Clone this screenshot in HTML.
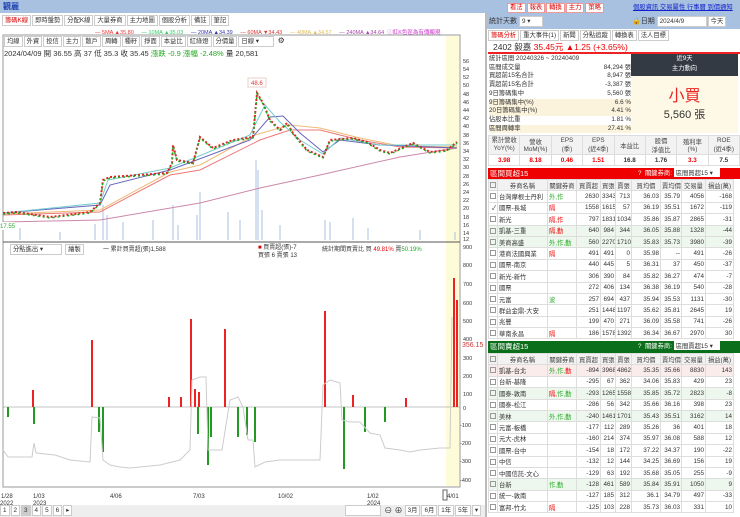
<!DOCTYPE html>
<html><head><meta charset="utf-8"><style>
*{box-sizing:border-box;margin:0;padding:0}
body{width:740px;height:517px;overflow:hidden;background:#fff;font-family:"Liberation Sans","Noto Sans CJK TC",sans-serif;font-size:8px;color:#333;position:relative}
.abs{position:absolute}
.top{left:0;top:0;width:740px;height:13px;background:#a9c1e0}
.tab{display:inline-block;border:1px solid #ccc;padding:0 2px;height:11px;line-height:9px;font-size:6.3px;margin-right:1px;background:#fff;vertical-align:top}
.btn{display:inline-block;border:1px solid #e99;color:#d00;padding:0 2px;height:10px;line-height:8px;font-size:6.3px;background:#fff;margin-right:1px}
table{border-collapse:collapse;font-size:6.3px;table-layout:fixed}
td{border:1px solid #ddd;height:11.4px;padding:0 1px;text-align:right;white-space:nowrap;overflow:hidden}
td.l{text-align:left}
.hd td{background:#f2f2f2;text-align:center;color:#444}
.g{background:#eef7ee}.p{background:#fbecec}
.cb{display:inline-block;width:6px;height:6px;border:1px solid #999;vertical-align:middle}
.r{color:#e00}.gr{color:#2a2}
</style></head><body>
<div class="abs top"><span style="position:absolute;left:3px;top:1px;color:#1a3fb0;font-weight:bold;font-size:8px">觀麗</span>
<div style="position:absolute;left:507px;top:2px;white-space:nowrap"><span class="btn">看法</span><span class="btn">報表</span><span class="btn">轉換</span><span class="btn">主力</span><span class="btn">策略</span></div>
<div style="position:absolute;left:633px;top:2px;font-size:6.3px;color:#12c;text-decoration:underline;white-space:nowrap">個股資訊 交易屬性 行事曆 到價通知</div></div>
<div class="abs" style="left:2px;top:15px;white-space:nowrap"><span class="tab" style="color:#d00">籌碼K線</span><span class="tab">即時盤勢</span><span class="tab">分配K線</span><span class="tab">大量券商</span><span class="tab">主力地圖</span><span class="tab">個股分析</span><span class="tab">備註</span><span class="tab">筆記</span></div>
<div class="abs" style="left:95px;top:28px;font-size:5.5px;white-space:nowrap"><span style="color:#e33">— 5MA ▲35.80</span>&nbsp;&nbsp;&nbsp;&nbsp; <span style="color:#3c6">— 10MA ▲35.03</span>&nbsp;&nbsp;&nbsp;&nbsp; <span style="color:#33a">— 20MA ▲34.39</span>&nbsp;&nbsp;&nbsp;&nbsp; <span style="color:#d33">— 60MA ▼34.43</span>&nbsp;&nbsp;&nbsp;&nbsp; <span style="color:#db5">— 40MA ▲34.57</span>&nbsp;&nbsp;&nbsp;&nbsp; <span style="color:#a4a">— 240MA ▲34.64</span>&nbsp; <span style="color:#c3c">ⓘ紅K色區為有傳顯現</span></div>
<svg class="abs" style="left:0;top:33px" width="485" height="472">
<rect x="3" y="2" width="457" height="452" fill="none" stroke="#999"/>
<rect x="446" y="3" width="13" height="450" fill="#fdfbd8"/>
<line x1="3" y1="209" x2="460" y2="209" stroke="#555"/>
<g font-size="5.5" fill="#333">
<text x="463" y="30">56</text><text x="463" y="38">54</text><text x="463" y="46">52</text><text x="463" y="54">50</text><text x="463" y="63">48</text><text x="463" y="71">46</text><text x="463" y="79">44</text><text x="463" y="87">42</text><text x="463" y="95">40</text><text x="463" y="104">38</text><text x="463" y="112">36</text><text x="463" y="120">34</text><text x="463" y="128">32</text><text x="463" y="136">30</text><text x="463" y="145">28</text><text x="463" y="153">26</text><text x="463" y="161">24</text><text x="463" y="169">22</text><text x="463" y="177">20</text><text x="463" y="186">18</text><text x="463" y="194">16</text><text x="463" y="202">14</text><text x="463" y="208">12</text>
<text x="463" y="216">900</text><text x="463" y="234">800</text><text x="463" y="253">700</text><text x="463" y="272">600</text><text x="463" y="290">500</text><text x="463" y="308">400</text><text x="463" y="327">300</text><text x="463" y="345">200</text><text x="463" y="363">100</text><text x="463" y="377">0</text><text x="460" y="394">-100</text><text x="460" y="412">-200</text><text x="460" y="430">-300</text><text x="460" y="449">-400</text>
<text x="462" y="314" fill="#c33" font-size="7">356.15</text>
</g>
<g transform="translate(0,-33)">
<g stroke="#b8cce4" stroke-width="1.2">
<line x1="20" y1="240" x2="20" y2="228"/><line x1="60" y1="240" x2="60" y2="232"/><line x1="95" y1="240" x2="95" y2="224"/><line x1="103" y1="240" x2="103" y2="205"/><line x1="107" y1="240" x2="107" y2="215"/><line x1="123" y1="240" x2="123" y2="222"/><line x1="153" y1="240" x2="153" y2="220"/><line x1="173" y1="240" x2="173" y2="205"/><line x1="178" y1="240" x2="178" y2="225"/><line x1="200" y1="240" x2="200" y2="192"/><line x1="197" y1="240" x2="197" y2="215"/><line x1="228" y1="240" x2="228" y2="212"/><line x1="240" y1="240" x2="240" y2="220"/><line x1="256" y1="240" x2="256" y2="160"/><line x1="258" y1="240" x2="258" y2="170"/><line x1="262" y1="240" x2="262" y2="210"/><line x1="280" y1="240" x2="280" y2="225"/><line x1="325" y1="240" x2="325" y2="220"/><line x1="330" y1="240" x2="330" y2="222"/><line x1="353" y1="240" x2="353" y2="218"/><line x1="368" y1="240" x2="368" y2="228"/><line x1="420" y1="240" x2="420" y2="230"/><line x1="455" y1="240" x2="455" y2="232"/>
</g>
<polyline fill="none" stroke="#c8a" stroke-width="1" points="3,222 100,220 200,203 260,188 320,175 400,157 457,148"/>
<polyline fill="none" stroke="#e77" stroke-width="1" points="3,215 100,212 170,175 200,170 260,140 290,130 320,130 360,140 400,147 457,148"/>
<polyline fill="none" stroke="#eb7" stroke-width="1" points="3,214 100,210 170,172 200,165 255,135 290,125 320,128 360,138 400,146 457,147"/>
<polyline fill="none" stroke="#66b" stroke-width="1" points="3,213 100,205 110,185 170,170 250,140 270,117 283,116 300,133 323,152 340,140 380,145 457,148"/>
<polyline fill="none" stroke="#7cc" stroke-width="1" points="3,213 100,203 108,180 170,168 250,135 265,105 280,122 300,140 323,154 340,138 380,145 457,145"/>
<polyline fill="none" stroke="#d22" stroke-width="2" stroke-dasharray="2 2" points="3,213 17,212 50,217 90,212 100,203 103,180 110,177 167,173 172,163 173,145 177,160 193,163 200,137 213,148 233,140 253,137 257,93 263,103 270,120 280,130 287,123 293,133 307,150 323,157 330,140 353,138 367,142 380,150 390,153 413,143 430,152 447,150 457,142"/>
<polyline fill="none" stroke="#2a2" stroke-width="1.5" stroke-dasharray="2 3" points="3,214 17,213 50,218 90,213 100,204 103,181 110,178 167,174 172,164 173,146 177,161 193,164 200,138 213,149 233,141 253,138 257,94 263,104 270,121 280,131 287,124 293,134 307,151 323,158 330,141 353,139 367,143 380,151 390,154 413,144 430,153 447,151 457,143"/>
<rect x="248" y="78" width="18" height="9" fill="#fff" stroke="#ecc"/><text x="251" y="85" font-size="6" fill="#d33">48.6</text>
<rect x="0" y="222" width="14" height="8" fill="#fff"/><text x="0" y="228" font-size="6" fill="#3a3">17.55</text>
<g stroke="#888" stroke-width=".5"><line x1="3" y1="407" x2="460" y2="407"/></g>
<g fill="#e22"><rect x="32" y="390" width="2" height="17"/><rect x="91" y="340" width="2" height="67"/><rect x="190" y="319" width="2" height="88"/><rect x="224" y="329" width="2" height="78"/><rect x="324" y="311" width="2" height="96"/><rect x="453" y="278" width="2" height="129"/><rect x="456" y="300" width="2" height="107"/><rect x="168" y="397" width="2" height="10"/><rect x="180" y="397" width="2" height="10"/><rect x="194" y="389" width="2" height="18"/><rect x="198" y="392" width="2" height="15"/><rect x="352" y="395" width="2" height="12"/><rect x="405" y="398" width="2" height="9"/></g>
<g fill="#292"><rect x="7" y="407" width="2" height="10"/><rect x="33" y="407" width="2" height="17"/><rect x="98" y="407" width="2" height="25"/><rect x="102" y="407" width="2" height="45"/><rect x="197" y="407" width="2" height="27"/><rect x="207" y="407" width="2" height="58"/><rect x="210" y="407" width="2" height="30"/><rect x="237" y="407" width="2" height="30"/><rect x="246" y="407" width="2" height="28"/><rect x="254" y="407" width="2" height="35"/><rect x="343" y="407" width="2" height="62"/><rect x="364" y="407" width="2" height="25"/><rect x="384" y="407" width="2" height="15"/></g>
<polyline fill="none" stroke="#ccc" stroke-width="1" points="3,450 8,457 32,457 34,443 36,453 55,455 70,460 90,462 92,417 100,418 103,460 110,465 120,467 130,468 160,465 180,460 190,450 192,380 200,377 206,377 208,450 222,450 230,400 238,397 243,407 248,440 253,440 255,467 265,462 280,460 300,460 320,460 323,385 330,380 340,383 342,420 350,422 360,422 370,433 380,435 385,448 400,450 410,452 420,450 440,448 450,448 452,317"/>
</g>
<g font-size="6" fill="#333"><text x="1" y="465">1/28</text><text x="0" y="472">2022</text><text x="33" y="465">1/03</text><text x="33" y="472">2023</text><text x="110" y="465">4/06</text><text x="193" y="465">7/03</text><text x="278" y="465">10/02</text><text x="367" y="465">1/02</text><text x="367" y="472">2024</text><text x="447" y="465">4/01</text></g>
<rect x="443" y="457" width="4" height="10" fill="#fff" stroke="#666"/>
</svg>
<div class="abs" style="left:4px;top:36px;width:440px;height:24px">
<div style="white-space:nowrap"><span class="tab">均線</span><span class="tab">外資</span><span class="tab">投信</span><span class="tab">主力</span><span class="tab">散戶</span><span class="tab">周轉</span><span class="tab">種籽</span><span class="tab">掙面</span><span class="tab">本益比</span><span class="tab">紅綠燈</span><span class="tab">分價量</span><span class="tab" style="width:36px">日線 ▾</span> ⚙</div>
<div style="font-size:7.5px;margin-top:1px;white-space:nowrap">2024/04/09 開 36.55 高 37 低 35.3 收 35.45 <span class="gr">漲跌 -0.9 漲幅 -2.48%</span> 量 20,581</div></div>
<div class="abs" style="left:10px;top:244px;white-space:nowrap"><span class="tab" style="width:52px">分點進出 ▾</span> <span class="tab">繪製</span></div>
<div class="abs" style="left:103px;top:244px;font-size:6px">一 累計買賣超(張)1,588</div>
<div class="abs" style="left:258px;top:244px;font-size:6px;line-height:8px"><span style="color:#d00">■</span> 買賣超(張)-7<br>買張 6 賣張 13</div>
<div class="abs" style="left:322px;top:244px;font-size:6px">統計期間買賣比 買 <span class="r">49.81%</span> 賣<span class="gr">50.19%</span></div>
<div class="abs" style="left:0;top:505px;width:485px;height:12px;background:#eee;white-space:nowrap"><span class="tab">1</span><span class="tab">2</span><span class="tab" style="background:#ccc">3</span><span class="tab">4</span><span class="tab">5</span><span class="tab">6</span><span class="tab">▸</span>
<span style="position:absolute;left:345px;top:0;white-space:nowrap"><span class="tab" style="width:36px"></span> ⊖ ⊕ <span class="tab">3月</span><span class="tab">6月</span><span class="tab">1年</span><span class="tab">5年</span><span class="tab">▾</span></span></div>
<div class="abs" style="left:485px;top:13px;width:2px;height:504px;background:#bbb"></div>
<div class="abs" style="left:487px;top:13px;width:253px;height:16px;background:#a9c1e0;font-size:7px;padding:3px 2px;white-space:nowrap">統計天數 <span class="tab" style="width:24px">9 ▾</span><span style="position:absolute;left:145px;top:3px">🔒日期 <span class="tab" style="width:50px">2024/4/9</span><span class="tab">今天</span></span></div>
<div class="abs" style="left:488px;top:30px;white-space:nowrap"><span class="tab" style="color:#d00">籌碼分析</span><span class="tab">重大事件(1)</span><span class="tab">新聞</span><span class="tab">分點追蹤</span><span class="tab">轉換表</span><span class="tab">法人目標</span></div>
<div class="abs" style="left:488px;top:42px;width:252px;height:12px;border-bottom:2px solid #e22;font-size:8.5px;line-height:10px;padding-left:5px;white-space:nowrap">2402 毅嘉 <span class="r">35.45元 ▲1.25 (+3.65%)</span></div>
<div class="abs" style="left:489px;top:55px;width:142px;font-size:6.3px;line-height:8.7px">
<div>統計區間 20240326 ~ 20240409</div>
<div>區間成交量<span style="float:right">84,294 張</span></div>
<div>買超前15名合計<span style="float:right">8,947 張</span></div>
<div>賣超前15名合計<span style="float:right">-3,387 張</span></div>
<div>9日籌碼集中<span style="float:right">5,560 張</span></div>
<div style="background:#fbf3dc">9日籌碼集中(%)<span style="float:right">6.6 %</span></div>
<div style="background:#fbf3dc">20日籌碼集中(%)<span style="float:right">4.41 %</span></div>
<div>佔股本比重<span style="float:right">1.81 %</span></div>
<div style="background:#fbf3dc">區間周轉率<span style="float:right">27.41 %</span></div></div>
<div class="abs" style="left:631px;top:54px;width:107px;height:22px;background:#333a44;color:#fff;text-align:center;font-size:6.3px;line-height:10px">近9天<br>主力動向</div>
<div class="abs" style="left:631px;top:76px;width:107px;height:57px;background:#fdf9e6;text-align:center"><div style="color:#e22;font-size:16px;margin-top:6px">小買</div><div style="font-size:11px">5,560 張</div></div>
<div class="abs" style="left:488px;top:135px;width:252px">
<table style="width:252px"><tr class="hd"><td style="height:19px;line-height:8px">累計營收<br>YoY(%)</td><td>營收<br>MoM(%)</td><td>EPS<br>(季)</td><td>EPS<br>(近4季)</td><td>本益比</td><td>股價<br>淨值比</td><td>殖利率<br>(%)</td><td>ROE<br>(近4季)</td></tr>
<tr style="font-weight:bold"><td style="text-align:center" class="r">3.98</td><td style="text-align:center" class="r">8.18</td><td style="text-align:center" class="r">0.46</td><td style="text-align:center" class="r">1.51</td><td style="text-align:center">16.8</td><td style="text-align:center">1.76</td><td style="text-align:center" class="r">3.3</td><td style="text-align:center">7.5</td></tr></table></div>
<div class="abs" style="left:488px;top:168px;width:252px;height:11px;background:#e00;color:#fff;font-size:7.5px;padding-left:2px;white-space:nowrap">區間買超15<span style="position:absolute;left:150px;font-size:6.3px">?&nbsp; 關鍵券商: <span style="background:#fff;color:#333;padding:0 2px;display:inline-block;width:46px">區間買超15 ▾</span></span></div>
<div class="abs" style="left:488px;top:179px;width:252px;overflow:hidden">
<table style="width:245px"><colgroup><col style="width:9px"><col style="width:50px"><col style="width:29px"><col style="width:24px"><col style="width:15px"><col style="width:16px"><col style="width:29px"><col style="width:21px"><col style="width:24px"><col style="width:28px"></colgroup>
<tr class="hd"><td><span class="cb"></span></td><td>券商名稱</td><td>關鍵券商</td><td>買賣超</td><td>買張</td><td>賣張</td><td>買均價</td><td>賣均價</td><td>交易量</td><td>損益(萬)</td></tr>
<tr><td><span class="cb"></span></td><td class="l">台灣摩根士丹利</td><td class="l gr">外,作</td><td>2630</td><td>3343</td><td>713</td><td>36.03</td><td>35.79</td><td>4056</td><td>-168</td></tr>
<tr><td>✓</td><td class="l">國票-長城</td><td class="l r">隔</td><td>1558</td><td>1615</td><td>57</td><td>36.19</td><td>35.51</td><td>1672</td><td>-119</td></tr>
<tr><td><span class="cb"></span></td><td class="l">新光</td><td class="l r">隔,作</td><td>797</td><td>1831</td><td>1034</td><td>35.86</td><td>35.87</td><td>2865</td><td>-31</td></tr>
<tr class="g"><td><span class="cb"></span></td><td class="l">凱基-三重</td><td class="l r">隔,勤</td><td>640</td><td>984</td><td>344</td><td>36.05</td><td>35.88</td><td>1328</td><td>-44</td></tr>
<tr class="g"><td><span class="cb"></span></td><td class="l">美商高盛</td><td class="l gr">外,作,勤</td><td>560</td><td>2270</td><td>1710</td><td>35.83</td><td>35.73</td><td>3980</td><td>-39</td></tr>
<tr><td><span class="cb"></span></td><td class="l">港商法國興業</td><td class="l r">隔</td><td>491</td><td>491</td><td>0</td><td>35.98</td><td>--</td><td>491</td><td>-26</td></tr>
<tr><td><span class="cb"></span></td><td class="l">國票-南京</td><td></td><td>440</td><td>445</td><td>5</td><td>36.31</td><td>37</td><td>450</td><td>-37</td></tr>
<tr><td><span class="cb"></span></td><td class="l">新光-新竹</td><td></td><td>306</td><td>390</td><td>84</td><td>35.82</td><td>36.27</td><td>474</td><td>-7</td></tr>
<tr><td><span class="cb"></span></td><td class="l">國票</td><td></td><td>272</td><td>406</td><td>134</td><td>36.38</td><td>36.19</td><td>540</td><td>-28</td></tr>
<tr><td><span class="cb"></span></td><td class="l">元富</td><td class="l gr">波</td><td>257</td><td>694</td><td>437</td><td>35.94</td><td>35.53</td><td>1131</td><td>-30</td></tr>
<tr><td><span class="cb"></span></td><td class="l">群益金鼎-大安</td><td></td><td>251</td><td>1448</td><td>1197</td><td>35.62</td><td>35.81</td><td>2645</td><td>19</td></tr>
<tr><td><span class="cb"></span></td><td class="l">兆豐</td><td></td><td>199</td><td>470</td><td>271</td><td>36.09</td><td>35.58</td><td>741</td><td>-26</td></tr>
<tr><td><span class="cb"></span></td><td class="l">華南永昌</td><td class="l r">隔</td><td>186</td><td>1578</td><td>1392</td><td>36.34</td><td>36.67</td><td>2970</td><td>30</td></tr></table></div>
<div class="abs" style="left:488px;top:341px;width:252px;height:12px;background:#0a6e1a;color:#fff;font-size:7.5px;padding-left:2px;white-space:nowrap">區間賣超15<span style="position:absolute;left:150px;font-size:6.3px">?&nbsp; 關鍵券商: <span style="background:#fff;color:#333;padding:0 2px;display:inline-block;width:46px">區間賣超15 ▾</span></span></div>
<div class="abs" style="left:488px;top:353px;width:252px;overflow:hidden">
<table style="width:245px"><colgroup><col style="width:9px"><col style="width:50px"><col style="width:29px"><col style="width:24px"><col style="width:15px"><col style="width:16px"><col style="width:29px"><col style="width:21px"><col style="width:24px"><col style="width:28px"></colgroup>
<tr class="hd"><td><span class="cb"></span></td><td>券商名稱</td><td>關鍵券商</td><td>買賣超</td><td>買張</td><td>賣張</td><td>買均價</td><td>賣均價</td><td>交易量</td><td>損益(萬)</td></tr>
<tr class="p"><td><span class="cb"></span></td><td class="l">凱基-台北</td><td class="l gr">外,作,<span class="r">勤</span></td><td>-894</td><td>3968</td><td>4862</td><td>35.35</td><td>35.66</td><td>8830</td><td>143</td></tr>
<tr><td><span class="cb"></span></td><td class="l">台新-基隆</td><td></td><td>-295</td><td>67</td><td>362</td><td>34.06</td><td>35.83</td><td>429</td><td>23</td></tr>
<tr class="g"><td><span class="cb"></span></td><td class="l">國泰-敦南</td><td class="l r">隔,<span class="gr">作,勤</span></td><td>-293</td><td>1265</td><td>1558</td><td>35.85</td><td>35.72</td><td>2823</td><td>-8</td></tr>
<tr><td><span class="cb"></span></td><td class="l">國泰-松江</td><td></td><td>-286</td><td>56</td><td>342</td><td>35.66</td><td>36.16</td><td>398</td><td>23</td></tr>
<tr class="g"><td><span class="cb"></span></td><td class="l">美林</td><td class="l gr">外,作,勤</td><td>-240</td><td>1461</td><td>1701</td><td>35.43</td><td>35.51</td><td>3162</td><td>14</td></tr>
<tr><td><span class="cb"></span></td><td class="l">元富-板橋</td><td></td><td>-177</td><td>112</td><td>289</td><td>35.26</td><td>36</td><td>401</td><td>18</td></tr>
<tr><td><span class="cb"></span></td><td class="l">元大-虎林</td><td></td><td>-160</td><td>214</td><td>374</td><td>35.97</td><td>36.08</td><td>588</td><td>12</td></tr>
<tr><td><span class="cb"></span></td><td class="l">國票-台中</td><td></td><td>-154</td><td>18</td><td>172</td><td>37.22</td><td>34.37</td><td>190</td><td>-22</td></tr>
<tr><td><span class="cb"></span></td><td class="l">中信</td><td></td><td>-132</td><td>12</td><td>144</td><td>34.25</td><td>36.69</td><td>156</td><td>19</td></tr>
<tr><td><span class="cb"></span></td><td class="l">中國信託-文心</td><td></td><td>-129</td><td>63</td><td>192</td><td>35.68</td><td>35.05</td><td>255</td><td>-9</td></tr>
<tr class="g"><td><span class="cb"></span></td><td class="l">台新</td><td class="l gr">作,勤</td><td>-128</td><td>461</td><td>589</td><td>35.84</td><td>35.91</td><td>1050</td><td>9</td></tr>
<tr><td><span class="cb"></span></td><td class="l">統一-敦南</td><td></td><td>-127</td><td>185</td><td>312</td><td>36.1</td><td>34.79</td><td>497</td><td>-33</td></tr>
<tr><td><span class="cb"></span></td><td class="l">富邦-竹北</td><td class="l r">隔</td><td>-125</td><td>103</td><td>228</td><td>35.73</td><td>36.03</td><td>331</td><td>10</td></tr></table></div>
</body></html>
